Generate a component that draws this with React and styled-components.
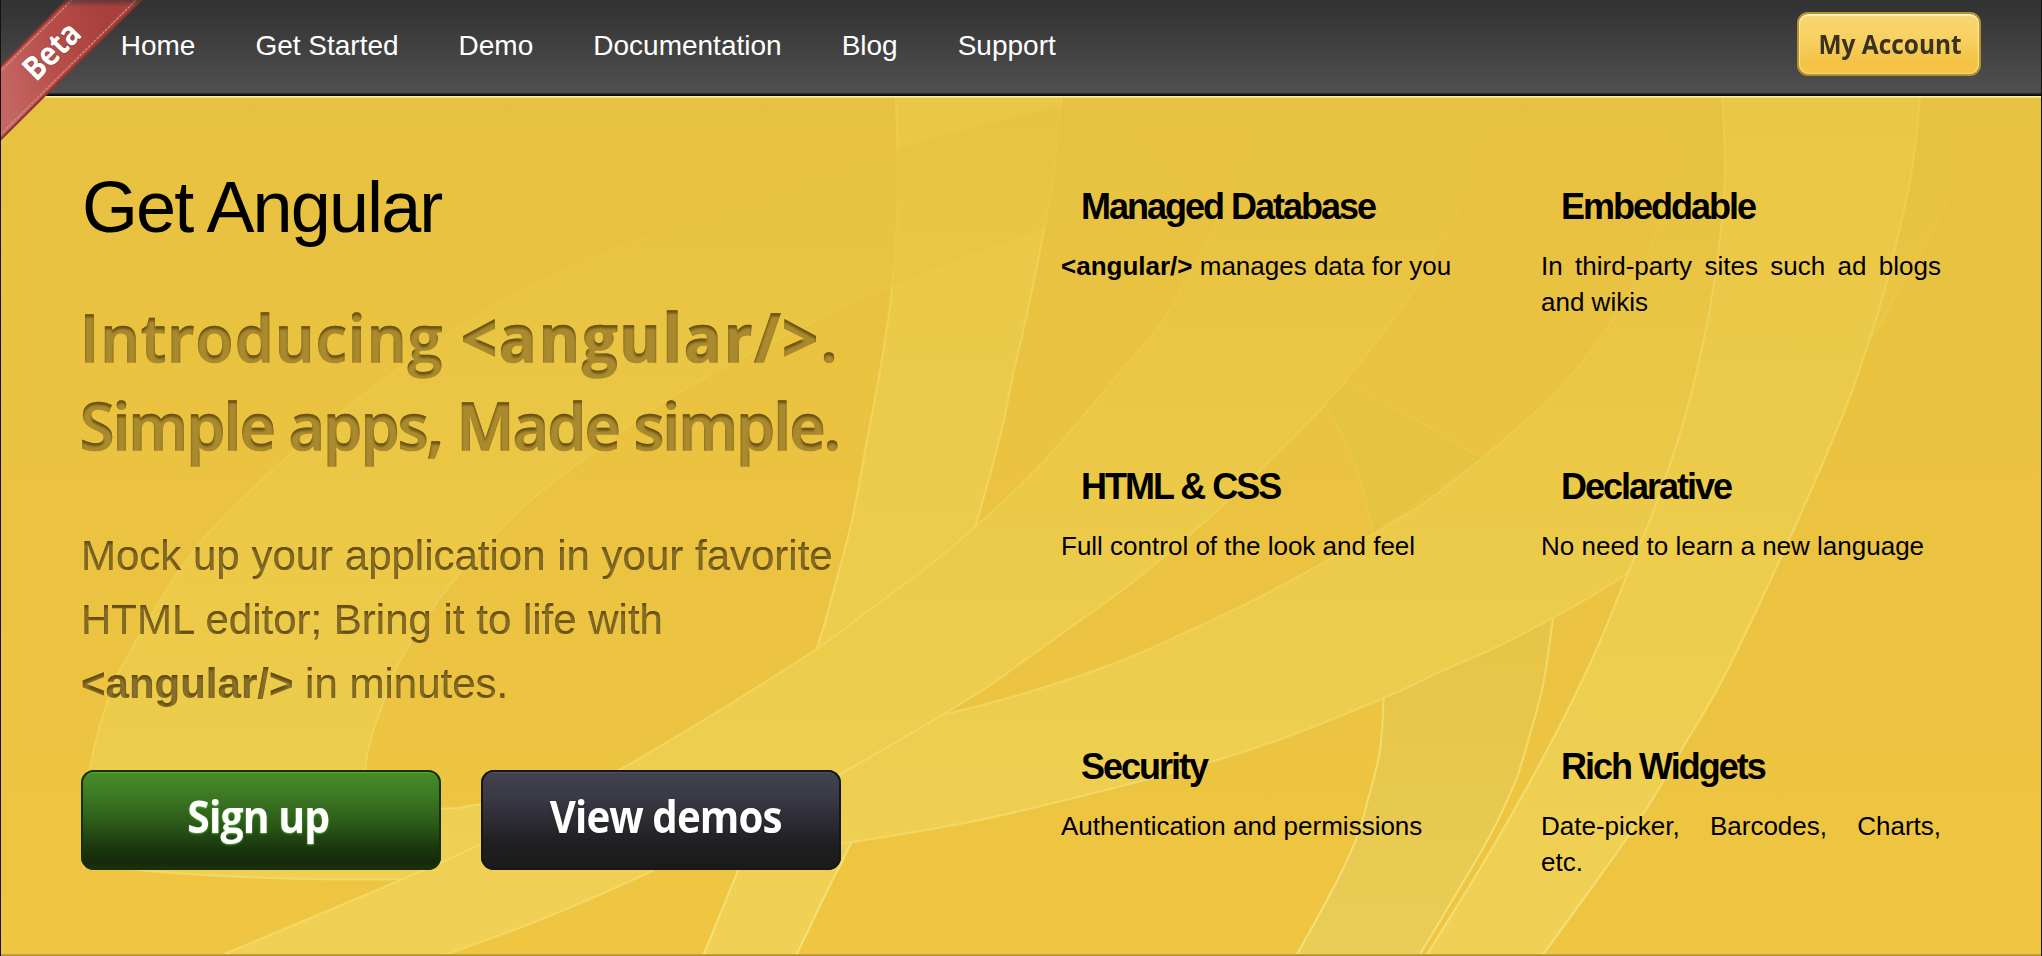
import React from "react";
import styled, { createGlobalStyle } from "styled-components";

const GlobalStyle = createGlobalStyle`
  *, *::before, *::after { box-sizing: border-box; }
  body { margin: 0; background: #111; }
`;

const sans = `"Liberation Sans", Arial, Helvetica, sans-serif`;
const humanist = `"Open Sans", "Noto Sans", sans-serif`;

const Page = styled.div`
  position: relative;
  display: flex;
  flex-direction: column;
  width: 2042px;
  height: 956px;
  overflow: hidden;
  border: solid #14130f;
  border-width: 0 1px;
  font-family: ${sans};
  color: #000;
`;

const Header = styled.header`
  display: flex;
  flex: none;
  justify-content: space-between;
  align-items: flex-start;
  height: 96px;
  padding: 12px 60px 0 119.7px;
  background: linear-gradient(#333 0, #353535 12px, #4d4d4d 84px, #505050 93px, #2c2c2c 93px, #2c2c2c 94px, #050505 95px);
`;

const Nav = styled.nav`
  display: flex;
  gap: 60px;
  padding-top: 18px;
`;

const NavLink = styled.a`
  font-size: 28px;
  line-height: 32px;
  color: #fff;
`;

const AccountButton = styled.button`
  display: flex;
  align-items: center;
  justify-content: center;
  width: 184px;
  height: 64px;
  padding: 1px 0 0 3px;
  border: 2px solid #b4922c;
  border-radius: 11px;
  background: linear-gradient(#f8d774, #f8d061 45%, #f4c144 80%, #f6c548);
  box-shadow: inset 0 2px 1px #fdf0bd, inset 1px 0 1px #fbe6a0, inset -1px 0 1px #fbe6a0, inset 0 -1px 1px #f9d768;
  color: #38321f;
`;

/* Label drawn at its natural size and condensed to the given width factor. */
const Label = styled.span`
  display: inline-block;
  flex: none;
  font-family: ${humanist};
  font-size: ${(p) => p.$size}px;
  font-weight: ${(p) => p.$weight};
  line-height: 1.2;
  letter-spacing: ${(p) => p.$spacing || 0}px;
  white-space: nowrap;
  transform: scaleX(${(p) => p.$stretch});
  transform-origin: ${(p) => p.$origin || "center"};
`;

const Ribbon = styled.svg`
  position: absolute;
  left: 0;
  top: 0;
`;

const Hero = styled.main`
  position: relative;
  isolation: isolate;
  flex: 1;
  min-height: 0;
  display: flex;
  gap: 220px;
  padding: 0 100px 0 80px;
  border-top: 1px solid #fff0a2;
`;

const Backdrop = styled.svg`
  position: absolute;
  left: -1px;
  top: 0;
  z-index: -1;
`;

const Intro = styled.section`
  width: 760px;
`;

const Title = styled.h1`
  margin: 70px 0 0 1px;
  font-size: 72px;
  font-weight: 400;
  line-height: 80px;
  letter-spacing: -1.9px;
`;

const Slogan = styled.h2`
  display: flex;
  flex-direction: column;
  margin: 45px 0 0 -1px;
  color: #a98a2e;
  font-size: 66px;
  -webkit-text-stroke: 1.6px #a98a2e;
  filter: url(#engrave);

  & > span { height: 88px; line-height: 88px; }
  b { font-weight: 700; letter-spacing: 2.6px; }
`;

const Lead = styled.p`
  margin: 56px 0 0;
  font-size: 42px;
  line-height: 64px;
  letter-spacing: 0;
  white-space: nowrap;
  color: #88702a;
  filter: url(#engrave);
`;

const Actions = styled.div`
  display: flex;
  gap: 40px;
  margin-top: 54px;
`;

const palettes = {
  green: {
    fill: "linear-gradient(#468b28 4%, #3f7c25 22%, #2c5c19 52%, #1c390f 76%, #16280a 93%, #1c350d)",
    edge: "#17300c",
    glow: "#57a935",
    halo: "#4fae2c",
  },
  dark: {
    fill: "linear-gradient(#42414f 4%, #3a3946 28%, #2b2b32 52%, #1f1f21 74%, #1a1a1a)",
    edge: "#17171b",
    glow: "#555463",
    halo: "#222",
  },
};

const ActionButton = styled.button`
  display: flex;
  align-items: center;
  justify-content: center;
  width: 360px;
  height: 100px;
  padding: ${(p) => p.$pad};
  border: 0;
  border-radius: 13px;
  background: ${(p) => palettes[p.$tone].fill};
  box-shadow: inset 0 0 0 2px ${(p) => palettes[p.$tone].edge}, inset 0 4px 1px -1px ${(p) => palettes[p.$tone].glow};
  color: #fff;
  text-shadow: 0 1px 2px ${(p) => palettes[p.$tone].halo};
`;

const Features = styled.section`
  display: grid;
  grid-template-columns: 400px 400px;
  grid-auto-rows: 280px;
  column-gap: 80px;
  padding-top: 90px;
`;

const FeatureTitle = styled.h3`
  margin: 0 0 21px 20px;
  font-size: 36px;
  line-height: 40px;
  letter-spacing: -2px;
`;

const FeatureText = styled.p`
  margin: 0;
  font-size: 26px;
  line-height: 36px;
  text-align: justify;
`;

const FootLine = styled.div`
  position: relative;
  flex: none;
  height: 2px;
  background: linear-gradient(#d0a93a, #a98a33);
`;

const features = [
  { title: "Managed Database", text: <><b>&lt;angular/&gt;</b> manages data for you</> },
  { title: "Embeddable", text: "In third-party sites such ad blogs and wikis" },
  { title: "HTML & CSS", text: "Full control of the look and feel" },
  { title: "Declarative", text: "No need to learn a new language" },
  { title: "Security", text: "Authentication and permissions" },
  { title: "Rich Widgets", text: "Date-picker, Barcodes, Charts, etc." },
];

/* Smooth curve through a list of points (Catmull-Rom to Bezier). */
function curve(pts) {
  let d = "";
  for (let i = 0; i < pts.length - 1; i++) {
    const p0 = pts[i - 1] || pts[i];
    const p1 = pts[i];
    const p2 = pts[i + 1];
    const p3 = pts[i + 2] || p2;
    d += `C${p1[0] + (p2[0] - p0[0]) / 6} ${p1[1] + (p2[1] - p0[1]) / 6} ${p2[0] - (p3[0] - p1[0]) / 6} ${p2[1] - (p3[1] - p1[1]) / 6} ${p2[0]} ${p2[1]}`;
  }
  return d;
}
const open = (pts) => `M${pts[0].join(" ")}${curve(pts)}`;
const closed = (a, b) => {
  const back = [...b].reverse();
  return `${open(a)}L${back[0].join(" ")}${curve(back)}Z`;
};

const bands = {
  stem: [
    [[895, 90], [898, 180], [892, 287], [880, 370], [867, 440], [852, 520], [831, 600], [817, 648], [780, 760], [738, 870], [703, 956]],
    [[1062, 90], [1055, 165], [1044, 230], [1028, 310], [1013, 375], [1000, 437], [975, 527], [925, 680], [850, 845], [830, 885], [796, 956]],
  ],
  arc: [
    [[1090, 98], [1009, 118], [898, 149], [753, 198], [607, 252], [500, 302], [400, 368], [293, 452], [200, 543], [137, 640], [110, 695], [90, 770], [84, 868]],
    [[1197, 187], [1044, 229], [898, 283], [793, 332], [673, 396], [590, 455], [520, 510], [450, 585], [406, 650], [384, 700], [365, 770], [370, 870]],
  ],
  leaf: [
    [[1384, 690], [1380, 750], [1367, 803], [1357, 837], [1338, 879], [1315, 922], [1296, 956]],
    [[1554, 610], [1544, 680], [1532, 727], [1517, 777], [1498, 820], [1478, 857], [1440, 921], [1419, 956]],
  ],
  sweep: [
    [[1675, 90], [1670, 160], [1651, 245], [1609, 325], [1555, 393], [1482, 458], [1428, 500], [1373, 534], [1273, 590], [1197, 627], [1128, 658], [1051, 685], [950, 713], [700, 768], [481, 804], [441, 809], [300, 820], [84, 812]],
    [[1957, 90], [1949, 190], [1927, 240], [1893, 300], [1866, 345], [1760, 470], [1628, 573], [1517, 637], [1440, 672], [1384, 698], [1281, 739], [1204, 764], [1074, 798], [975, 821], [852, 842], [750, 855], [600, 870], [403, 879], [270, 878], [148, 871], [84, 863]],
  ],
  diagonal: [
    [[1253, 90], [1245, 130], [1229, 185], [1212, 231], [1164, 318], [1124, 367], [1044, 461], [975, 527], [930, 565], [860, 617], [818, 648], [720, 710], [640, 758], [560, 803], [481, 844], [403, 879], [222, 955]],
    [[1499, 90], [1490, 133], [1471, 184], [1442, 240], [1411, 295], [1338, 390], [1281, 450], [1229, 500], [1185, 539], [1128, 586], [1070, 628], [1028, 658], [986, 688], [937, 718], [842, 773], [740, 826], [650, 872], [540, 920], [445, 955]],
  ],
  blade: [
    [[1722, 90], [1725, 170], [1721, 230], [1710, 308], [1697, 370], [1684, 420], [1667, 473], [1650, 520], [1628, 573], [1594, 655], [1555, 735], [1517, 805], [1478, 872], [1426, 956]],
    [[1921, 90], [1912, 170], [1897, 240], [1881, 303], [1862, 362], [1843, 415], [1798, 520], [1728, 669], [1682, 749], [1647, 808], [1613, 858], [1542, 956]],
  ],
};

function Band({ name, fill = "url(#band)", line = "url(#edge)" }) {
  const [a, b] = bands[name];
  return (
    <g>
      <path d={closed(a, b)} fill={fill} />
      <path d={open(a)} fill="none" stroke={line} strokeWidth="2" />
      <path d={open(b)} fill="none" stroke={line} strokeWidth="2" />
    </g>
  );
}

function Grad({ id, stops }) {
  return (
    <linearGradient id={id} gradientUnits="userSpaceOnUse" x1="0" y1="96" x2="0" y2="956">
      {stops.map(([offset, color, opacity = 1]) => (
        <stop key={offset} offset={offset} stopColor={color} stopOpacity={opacity} />
      ))}
    </linearGradient>
  );
}

function HeroBackdrop() {
  return (
    <Backdrop width="2042" height="859" viewBox="0 97 2042 859" aria-hidden="true">
      <defs>
        <Grad id="ground" stops={[[0, "#e7c140"], [1, "#efc541"]]} />
        <Grad id="band" stops={[[0, "#eac745"], [0.5, "#edcc4b"], [1, "#f0d156"]]} />
        <Grad id="softBand" stops={[[0, "#e7c140"], [0.5, "#ecc846"], [1, "#efd050"]]} />
        <Grad id="faintBand" stops={[[0, "#e7c140"], [0.3, "#eac644"], [0.6, "#edcc4b"], [1, "#f0d156"]]} />
        <Grad id="leafFill" stops={[[0.55, "#e6c343"], [1, "#e9cd57"]]} />
        <Grad id="edge" stops={[[0, "#f2dc6a", 0.3], [0.4, "#f2dc6a", 0.65], [1, "#f6e27a", 0.95]]} />
        <Grad id="faintEdge" stops={[[0, "#f0d860", 0], [0.25, "#f0d860", 0.2], [0.8, "#f4de70", 0.7]]} />
        <filter id="engrave" x="-2%" y="-5%" width="104%" height="110%" colorInterpolationFilters="sRGB">
          <feOffset in="SourceAlpha" dy="3" result="moved" />
          <feGaussianBlur in="moved" stdDeviation="1.3" result="soft" />
          <feComposite in="SourceAlpha" in2="soft" operator="out" result="rim" />
          <feFlood floodColor="#5a430a" floodOpacity="0.8" />
          <feComposite in2="rim" operator="in" result="shade" />
          <feMerge>
            <feMergeNode in="SourceGraphic" />
            <feMergeNode in="shade" />
          </feMerge>
        </filter>
      </defs>
      <rect y="97" width="2042" height="859" fill="url(#ground)" />
      <Band name="arc" fill="url(#softBand)" line="url(#faintEdge)" />
      <Band name="stem" />
      <path d={closed(...bands.arc)} fill="url(#softBand)" opacity=".6" />
      <Band name="leaf" fill="url(#leafFill)" />
      <Band name="sweep" fill="url(#faintBand)" line="url(#faintEdge)" />
      <Band name="diagonal" fill="url(#faintBand)" line="url(#faintEdge)" />
      <path d="M1346 382Q1410 415 1482 458L1373 534Q1360 460 1325 405Z" fill="#e7c342" stroke="#f0d860" strokeOpacity=".25" strokeWidth="1.5" />
      <Band name="blade" />
      <rect y="97" width="2042" height="1" fill="#f6db73" />
    </Backdrop>
  );
}

function BetaRibbon() {
  return (
    <Ribbon width="145" height="145" viewBox="1 0 145 145">
      <defs>
        <linearGradient id="ribbon" x1="0" y1="75" x2="110" y2="45" gradientUnits="userSpaceOnUse">
          <stop offset="0" stopColor="#c46662" />
          <stop offset=".5" stopColor="#b84e4a" />
          <stop offset="1" stopColor="#a8403d" />
        </linearGradient>
        <linearGradient id="fold" x1="0" y1="0" x2="0" y2="1">
          <stop offset="0" stopColor="#333" stopOpacity=".6" />
          <stop offset="1" stopColor="#333" stopOpacity="0" />
        </linearGradient>
      </defs>
      <path d="M0 68L68 0H142L0 141Z" fill="url(#ribbon)" />
      <path d="M0 67L67 0M0 140L141 0" stroke="#8e3434" strokeWidth="2" />
      <path d="M0 72L72 0M0 135L136 0" stroke="#d68f8b" strokeWidth="1.2" strokeDasharray="3 1" />
      <path d="M62 0H142L134 7H55Z" fill="url(#fold)" />
      <text
        transform="translate(36 82.5) rotate(-45) scale(.88 1)"
        fontFamily={humanist}
        fontSize="33"
        fontWeight="700"
        fill="#fff"
        stroke="#7b3b3a"
        strokeWidth="1"
        paintOrder="stroke"
      >
        Beta
      </text>
    </Ribbon>
  );
}

export default function App() {
  return (
    <Page>
      <GlobalStyle />
      <Header>
        <Nav>
          {["Home", "Get Started", "Demo", "Documentation", "Blog", "Support"].map((item) => (
            <NavLink key={item}>{item}</NavLink>
          ))}
        </Nav>
        <AccountButton>
          <Label $size={26} $weight={700} $stretch={0.94}>My Account</Label>
        </AccountButton>
      </Header>
      <Hero>
        <HeroBackdrop />
        <Intro>
          <Title>Get Angular</Title>
          <Slogan>
            <Label as="span" $size={66} $weight={600} $stretch={0.939} $spacing={1.6} $origin="left">
              Introducing <b>&lt;angular/&gt;</b>.
            </Label>
            <Label as="span" $size={66} $weight={600} $stretch={0.944} $spacing={-1.6} $origin="left">
              Simple apps, Made simple.
            </Label>
          </Slogan>
          <Lead>
            Mock up your application in your favorite
            <br />
            HTML editor; Bring it to life with
            <br />
            <b>&lt;angular/&gt;</b> in minutes.
          </Lead>
          <Actions>
            <ActionButton $tone="green" $pad="0 5px 7px 0">
              <Label $size={44} $weight={700} $stretch={0.93} $spacing={-1}>Sign up</Label>
            </ActionButton>
            <ActionButton $tone="dark" $pad="0 0 7px 10px">
              <Label $size={44} $weight={700} $stretch={0.915} $spacing={-1}>View demos</Label>
            </ActionButton>
          </Actions>
        </Intro>
        <Features>
          {features.map((f) => (
            <article key={f.title}>
              <FeatureTitle>{f.title}</FeatureTitle>
              <FeatureText>{f.text}</FeatureText>
            </article>
          ))}
        </Features>
      </Hero>
      <FootLine />
      <BetaRibbon />
    </Page>
  );
}
